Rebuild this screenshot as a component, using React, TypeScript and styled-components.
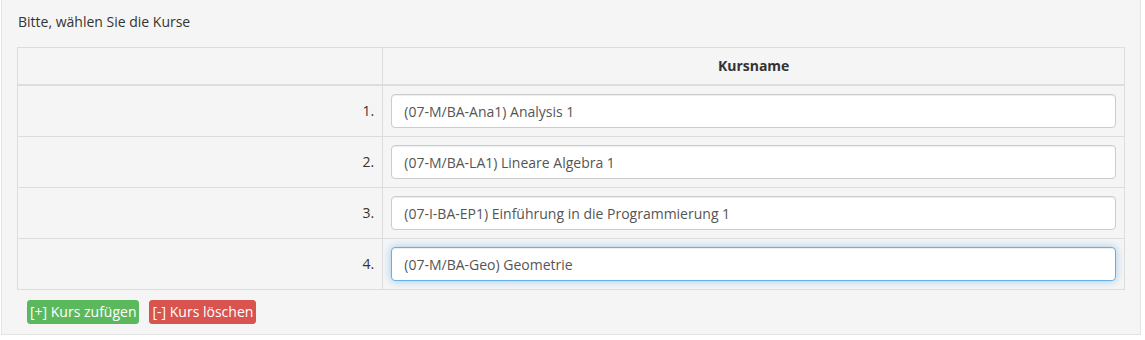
import styled, { createGlobalStyle } from 'styled-components'

const GlobalStyle = createGlobalStyle`
  html, body {
    margin: 0;
    padding: 0;
    background: #fff;
  }
  body {
    font-family: "Open Sans", "Liberation Sans", sans-serif;
    font-size: 14px;
    line-height: 20px;
    color: #333;
  }
`;

const Page = styled.div`
  padding: 0 4px 0 1px;
`;

const Well = styled.div`
  background: #f5f5f5;
  border: 1px solid #e3e3e3;
  border-top: none;
  padding: 12px 15px 10px 15px;
`;

const Intro = styled.div`
  margin-bottom: 15px;
  padding-left: 1px;
`;

const Table = styled.table`
  width: 100%;
  border-collapse: collapse;
  border: 1px solid #ddd;
`;

const HeadCell = styled.th<{ $w?: string }>`
  width: ${p => p.$w ?? 'auto'};
  border: 1px solid #ddd;
  border-bottom: 2px solid #ddd;
  padding: 8px;
  height: 20px;
  text-align: center;
  font-weight: 700;
`;

const NumCell = styled.td`
  border: 1px solid #ddd;
  padding: 8px;
  text-align: right;
  vertical-align: middle;
`;

const InputCell = styled.td`
  border: 1px solid #ddd;
  padding: 8px;
  vertical-align: middle;
`;

const Input = styled.input<{ $focus?: boolean }>`
  display: block;
  box-sizing: border-box;
  width: 100%;
  height: 34px;
  padding: 6px 12px;
  font-family: inherit;
  font-size: 14px;
  line-height: 20px;
  color: #555;
  background: #fff;
  border: 1px solid ${p => (p.$focus ? '#66afe9' : '#ccc')};
  border-radius: 4px;
  outline: none;
  box-shadow: ${p =>
    p.$focus
      ? 'inset 0 1px 1px rgba(0,0,0,.075), 0 0 8px rgba(102,175,233,.6)'
      : 'inset 0 1px 1px rgba(0,0,0,.075)'};
`;

const Actions = styled.div`
  display: flex;
  gap: 10px;
  margin: 10px 0 0 10px;
`;

const Button = styled.button<{ $kind: 'add' | 'remove' }>`
  font-family: inherit;
  font-size: 14px;
  line-height: 20px;
  padding: 1px 2px;
  color: #fff;
  border: 1px solid ${p => (p.$kind === 'add' ? '#5cb85c' : '#d9534f')};
  background: ${p => (p.$kind === 'add' ? '#5cb85c' : '#d9534f')};
  border-radius: 3px;
  cursor: pointer;
`;

const courses = [
  '(07-M/BA-Ana1) Analysis 1',
  '(07-M/BA-LA1) Lineare Algebra 1',
  '(07-I-BA-EP1) Einführung in die Programmierung 1',
  '(07-M/BA-Geo) Geometrie',
];

export default function App() {
  return (
    <Page>
      <GlobalStyle />
      <Well>
        <Intro>Bitte, wählen Sie die Kurse</Intro>
        <Table>
          <thead>
            <tr>
              <HeadCell $w="33%"></HeadCell>
              <HeadCell>Kursname</HeadCell>
            </tr>
          </thead>
          <tbody>
            {courses.map((c, i) => (
              <tr key={c}>
                <NumCell>{i + 1}.</NumCell>
                <InputCell>
                  <Input $focus={i === courses.length - 1} defaultValue={c} />
                </InputCell>
              </tr>
            ))}
          </tbody>
        </Table>
        <Actions>
          <Button $kind="add">[+] Kurs zufügen</Button>
          <Button $kind="remove">[-] Kurs löschen</Button>
        </Actions>
      </Well>
    </Page>
  )
}
